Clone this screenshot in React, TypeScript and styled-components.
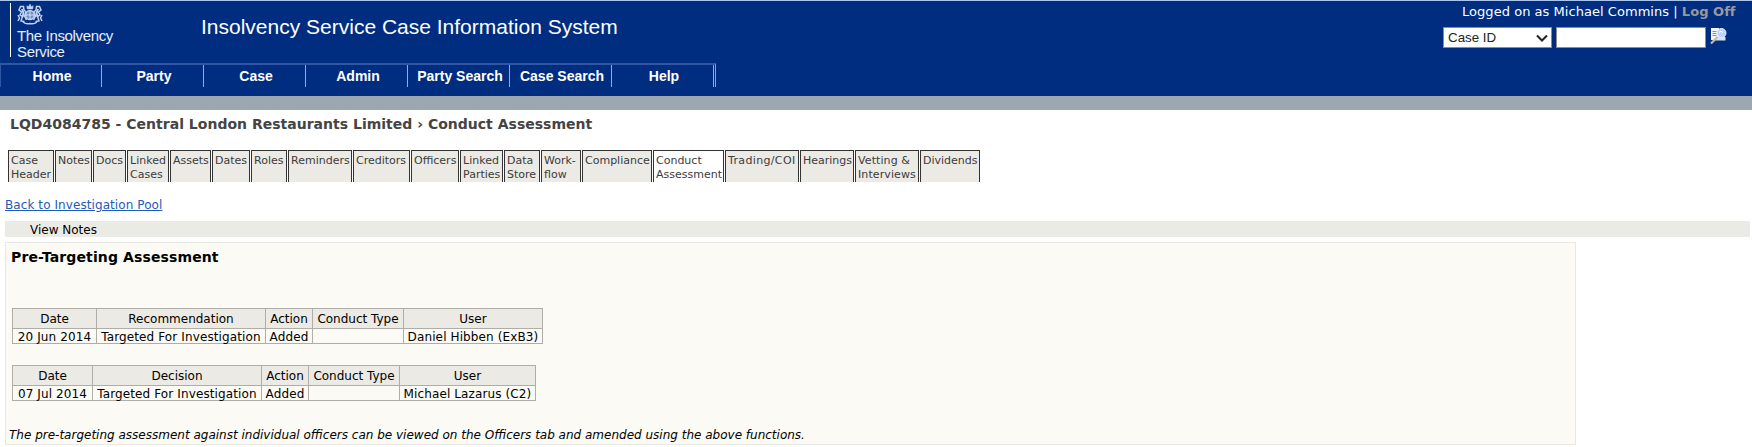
import React from 'react';
import styled, { createGlobalStyle } from 'styled-components';

const sans = '"DejaVu Sans", Verdana, sans-serif';
const arial = '"Liberation Sans", Arial, sans-serif';

const GlobalStyle = createGlobalStyle`
  body { margin: 0; background: #fff; color: #000; font: 12px/16px ${sans}; }
  * { box-sizing: border-box; }
`;

const Page = styled.div`
  width: 1752px;
  height: 447px;
  overflow: hidden;
`;
const Header = styled.header`
  height: 96px;
  background: #002d80;
  border-top: 1px solid #a9c4ee;
  color: #fff;
`;
const Masthead = styled.div`
  display: flex;
  height: 62px;
`;
const Brand = styled.div`
  margin: 2px 0 0 10px;
  height: 54px;
  width: 191px;
  border-left: 1px solid #fff;
  padding-left: 6px;
  font: 15px/16px ${arial};
  letter-spacing: -0.35px;
  color: #e6edfa;
`;
const Crest = styled.svg`
  display: block;
  width: 28px;
  height: 22px;
  margin-bottom: 3px;
`;
const Title = styled.h1`
  margin: 14px 0 0;
  font: 21px/24px ${arial};
  white-space: nowrap;
`;
const Account = styled.div`
  margin-left: auto;
  width: 309px;
  padding-top: 2px;
`;
const Login = styled.div`
  padding-left: 19px;
  font-size: 13px;
  line-height: 17px;
  letter-spacing: 0.04px;
  white-space: nowrap;
`;
const LogOff = styled.a`
  color: #999;
  font-weight: bold;
`;
const SearchRow = styled.div`
  display: flex;
  align-items: flex-start;
  margin-top: 7px;
`;
const CaseSelect = styled.div`
  display: flex;
  align-items: center;
  justify-content: space-between;
  width: 109px;
  height: 21px;
  padding: 0 3px 0 4px;
  background: #fff;
  border: 1px solid #8c8c80;
  color: #222;
  font: 13.33px/19px ${arial};
`;
const SearchInput = styled.input`
  width: 150px;
  height: 21px;
  margin: 0 4px;
  padding: 0;
  background: #fff;
  border: 1px solid #8c8c80;
`;
const Nav = styled.nav`
  display: flex;
  width: 716px;
  height: 24px;
  border-top: 2px solid #3057a4;
  border-right: 1px solid #86a3dc;
`;
const NavItem = styled.a`
  width: 102px;
  padding-left: 3px;
  border-left: 1px solid #8fabe2;
  text-align: center;
  font: bold 14px/22px ${arial};
  white-space: nowrap;
  &:first-child { width: 101px; padding-left: 2px; border-color: #3057a4; }
  &:last-child { width: 103px; border-right: 1px solid #8fabe2; }
`;
const Strip = styled.div`
  height: 14px;
  background: #9da7b2;
`;
const Crumb = styled.h2`
  margin: 6px 0 0 10px;
  height: 34px;
  color: #444;
  font: bold 14px/16px ${sans};
  letter-spacing: 0.01px;
  white-space: nowrap;
`;
const Tabs = styled.div`
  display: flex;
  gap: 1px;
  height: 32px;
  margin-left: 8px;
`;
const Tab = styled.a<{ $w: number; $active?: boolean; $spacing?: number }>`
  width: ${p => p.$w}px;
  border: 1px solid #333;
  border-bottom: 0;
  padding: 3px 0 0 2px;
  background: ${p => (p.$active ? '#fff' : '#ebeae5')};
  color: #3c3c3c;
  font-size: 11px;
  line-height: 14px;
  letter-spacing: ${p => p.$spacing ?? 0}px;
  white-space: pre;
`;
const BackLink = styled.a`
  display: block;
  width: max-content;
  margin: 15px 0 0 5px;
  color: #1c5bb8;
  letter-spacing: 0.08px;
  text-decoration: underline;
`;
const NotesBar = styled.div`
  width: 1745px;
  height: 16px;
  margin: 8px 0 5px 5px;
  padding-left: 25px;
  background: #ebebe5;
  line-height: 18px;
`;
const Panel = styled.section`
  width: 1571px;
  height: 203px;
  margin-left: 5px;
  background: #fbfaf5;
  border: 1px solid #e9e8e2;
`;
const PanelTitle = styled.h3`
  margin: 6px 0 0 5px;
  height: 59px;
  font: bold 14px/16px ${sans};
  letter-spacing: 0.12px;
`;
const Table = styled.table`
  margin: 0 0 21px 6px;
  border-collapse: collapse;
  table-layout: fixed;
  line-height: 14px;
  white-space: nowrap;
`;
const Th = styled.th<{ $w: number }>`
  width: ${p => p.$w}px;
  height: 20px;
  padding: 0;
  border: 1px solid #aeada8;
  background: #ebeae5;
  font-weight: normal;
`;
const Td = styled.td`
  height: 15px;
  padding: 2px 0 0;
  border: 1px solid #aeada8;
  line-height: 12px;
  letter-spacing: 0.12px;
  text-align: center;
`;
const Hint = styled.p`
  margin: 26px 0 0 3px;
  font-style: italic;
`;

const nav = ['Home', 'Party', 'Case', 'Admin', 'Party Search', 'Case Search', 'Help'];
const tabs: [string, number, number?][] = [
  ['Case\nHeader', 46], ['Notes', 37], ['Docs', 33], ['Linked\nCases', 42], ['Assets', 41],
  ['Dates', 38], ['Roles', 36], ['Reminders', 64], ['Creditors', 57], ['Officers', 48],
  ['Linked\nParties', 43], ['Data\nStore', 36], ['Work-\nflow', 40], ['Compliance', 70],
  ['Conduct\nAssessment', 71], ['Trading/COI', 74, 0.35], ['Hearings', 54], ['Vetting &\nInterviews', 64, 0.1],
  ['Dividends', 60],
];

type Grid = { heads: [string, number][]; row: string[] };
const grids: Grid[] = [
  {
    heads: [['Date', 84], ['Recommendation', 169], ['Action', 47], ['Conduct Type', 91], ['User', 139]],
    row: ['20 Jun 2014', 'Targeted For Investigation', 'Added', '', 'Daniel Hibben (ExB3)'],
  },
  {
    heads: [['Date', 80], ['Decision', 169], ['Action', 47], ['Conduct Type', 91], ['User', 136]],
    row: ['07 Jul 2014', 'Targeted For Investigation', 'Added', '', 'Michael Lazarus (C2)'],
  },
];

const Arms = () => (
  <Crest viewBox="0 0 28 22" fill="none" stroke="#c3d2ee" strokeWidth="1.5">
    <circle cx="13" cy="12" r="4.4" fill="#6f8fc8" />
    <path d="M13 8v8M9 12h8" stroke="#e8effb" strokeWidth=".8" />
    <path d="M10.2 6l-.4-3.2 1.8 1L13 1l1.4 2.8 1.8-1-.4 3.2z" fill="#c3d2ee" strokeWidth=".5" />
    <path d="M7.5 18.5L4 18l1.5-4.5L3 12l1.5-3L2 7l1.5-3.5h3L7 7l2 2-1.5 4 2 4M1 12l1.5 3L1 18" />
    <path d="M18.5 18.5L22 18l-1.5-4.5L23 12l-1.5-3L24 7l-1.5-3.5h-3L19 7l-2 2 1.500 4-2 4M25 12l-1.5 3 1.500 3" />
    <path d="M5 6l1.5 4-1 4M21 6l-1.5 4 1 4" strokeWidth="2" />
    <path d="M6 19q3 2.5 7 1.500 4 1 7-1.500" />
  </Crest>
);

export default function App() {
  return (
    <Page>
      <GlobalStyle />
      <Header>
        <Masthead>
          <Brand>
            <Arms />
            The Insolvency<br />Service
          </Brand>
          <Title>Insolvency Service Case Information System</Title>
          <Account>
            <Login>Logged on as Michael Commins | <LogOff>Log Off</LogOff></Login>
            <SearchRow>
              <CaseSelect>
                Case ID
                <svg width="12" height="8" fill="none" stroke="#222" strokeWidth="2"><path d="M1 1.5l5 5 5-5" /></svg>
              </CaseSelect>
              <SearchInput />
              <svg width="17" height="18" viewBox="0 0 17 18">
                <path d="M1 1h8v12H1z" fill="#f2f5ff" />
                <path d="M2.5 4.5h4M2.5 6.5h4M2.5 8.5h4" stroke="#6f8fd8" />
                <path d="M6 10h9.5v3.5H5z" fill="#d5e2f8" />
                <circle cx="11.5" cy="6" r="4.5" fill="#bcd4fa" stroke="#e5edff" />
                <path d="M9 5.500q2-2.500 4 0" fill="none" stroke="#fff" />
                <path d="M1 16.500l6.500-6.500" stroke="#cdb9a6" strokeWidth="2.2" />
              </svg>
            </SearchRow>
          </Account>
        </Masthead>
        <Nav>{nav.map(n => <NavItem key={n}>{n}</NavItem>)}</Nav>
      </Header>
      <Strip />
      <Crumb>LQD4084785 - Central London Restaurants Limited › Conduct Assessment</Crumb>
      <Tabs>
        {tabs.map(([label, w, spacing]) => (
          <Tab key={label} $w={w} $spacing={spacing} $active={label.startsWith('Conduct')}>{label}</Tab>
        ))}
      </Tabs>
      <BackLink>Back to Investigation Pool</BackLink>
      <NotesBar>View Notes</NotesBar>
      <Panel>
        <PanelTitle>Pre-Targeting Assessment</PanelTitle>
        {grids.map((g, i) => (
          <Table key={i}>
            <thead><tr>{g.heads.map(([h, w]) => <Th key={h} $w={w}>{h}</Th>)}</tr></thead>
            <tbody><tr>{g.row.map((c, j) => <Td key={j}>{c}</Td>)}</tr></tbody>
          </Table>
        ))}
        <Hint>The pre-targeting assessment against individual officers can be viewed on the Officers tab and amended using the above functions.</Hint>
      </Panel>
    </Page>
  );
}
